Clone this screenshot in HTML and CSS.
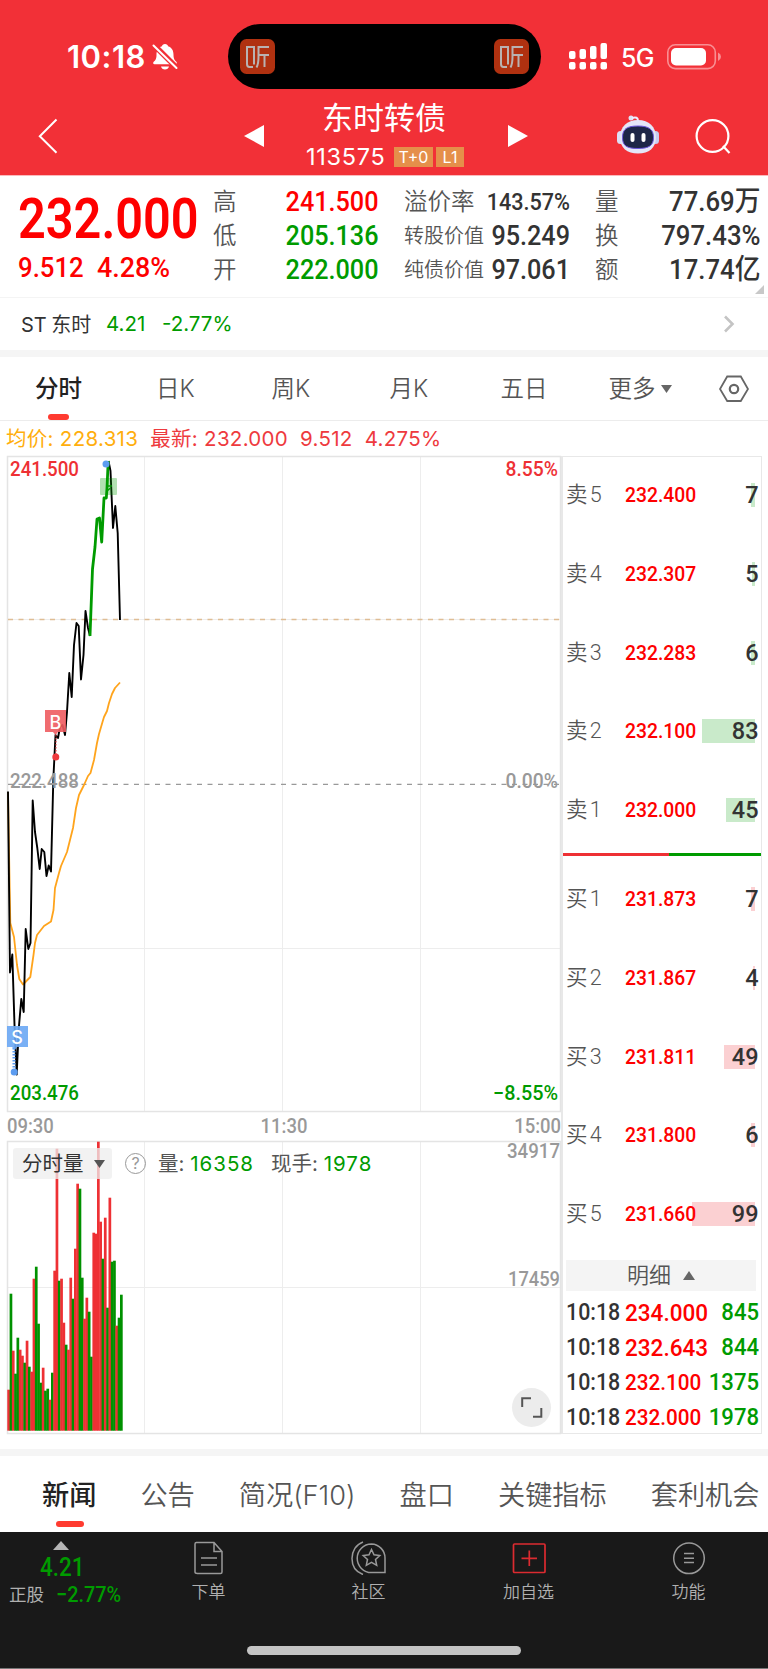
FILE: index.html
```html
<!DOCTYPE html>
<html lang="zh-CN">
<head>
    <meta charset="UTF-8">
    <meta name="viewport" content="width=device-width, initial-scale=1.0">
    <title>东时转债 113575</title>
    <link rel="stylesheet" href="styles.css">
</head>
<body>
    <header class="top">
        <div class="status">
            <span class="clock">10:18</span>
            <svg class="bell" width="26" height="28" viewBox="0 0 26 28">
                <path fill="#fff" d="M13 1c-1.8 0-2.800 1-3 2.200-4 1.200-5.500 4.500-5.500 8.500 0 4-1 5.300-3 7.300-.7.800-.3 2.200 1 2.200h21c1.300 0 1.700-1.400 1-2.200-2-2-3-3.300-3-7.300 0-4-1.500-7.300-5.500-8.500C15.800 2 14.800 1 13 1zM9 23.500h8c-.5 1.800-2 3-4 3s-3.500-1.200-4-3z"/>
                <path stroke="#f23037" stroke-width="5.500" d="M1 1l25 25"/>
                <path stroke="#fff" stroke-width="2" stroke-linecap="round" d="M1.500 2.500l23 22.500"/>
            </svg>
            <div class="island">
                <svg width="35" height="35" viewBox="0 0 35 35">
                    <rect width="35" height="35" rx="6.500" fill="#b03110"/>
                    <path fill="none" stroke="#b9b2b0" stroke-width="2" d="M13 28H9.500Q7 28 7 25V8h7v17.500M29 8H18.500v10q0 7-2 10.500M18.500 16H29M24.500 16v12"/>
                </svg>
                <svg width="35" height="35" viewBox="0 0 35 35">
                    <rect width="35" height="35" rx="6.500" fill="#b03110"/>
                    <path fill="none" stroke="#b9b2b0" stroke-width="2" d="M13 28H9.500Q7 28 7 25V8h7v17.500M29 8H18.500v10q0 7-2 10.500M18.500 16H29M24.500 16v12"/>
                </svg>
            </div>
            <svg class="signal" width="39" height="27" viewBox="0 0 39 27" fill="#fff">
                <rect x="0" y="8" width="6.500" height="8" rx="2"/><rect x="10.500" y="6" width="6.500" height="10" rx="2"/>
                <rect x="21" y="3" width="6.500" height="13" rx="2"/><rect x="31.500" y="0" width="6.500" height="16" rx="2"/>
                <rect x="0" y="19" width="6.500" height="7.500" rx="2"/><rect x="10.500" y="19" width="6.500" height="7.500" rx="2"/>
                <rect x="21" y="19" width="6.500" height="7.500" rx="2"/><rect x="31.500" y="19" width="6.500" height="7.500" rx="2"/>
            </svg>
            <span class="net">5G</span>
            <svg class="battery" width="55" height="26" viewBox="0 0 55 26">
                <rect x=".8" y=".8" width="47.500" height="23.800" rx="7.500" fill="none" stroke="#f98f93" stroke-width="1.600"/>
                <rect x="4" y="4" width="35" height="17.500" rx="5" fill="#fff"/>
                <path d="M51 8.500q3 1.500 3 4.200t-3 4.200z" fill="#f98f93"/>
            </svg>
        </div>
        <div class="nav">
            <svg class="back" width="20" height="36" viewBox="0 0 20 36"><path d="M18.500 1.500L1.800 18.300l16.700 16.500" fill="none" stroke="#fff" stroke-width="2"/></svg>
            <svg class="prev" width="20" height="22" viewBox="0 0 20 22"><path d="M20 0v22L0 11z" fill="#fff"/></svg>
            <div class="name">
                <h1>东时转债</h1>
                <div class="code"><span>113575</span><i>T+0</i><i>L1</i></div>
            </div>
            <svg class="next" width="20" height="22" viewBox="0 0 20 22"><path d="M0 0v22l20-11z" fill="#fff"/></svg>
            <svg class="robot" width="42" height="40" viewBox="0 0 42 40">
                <circle cx="14" cy="3" r="2.500" fill="#dfe2f5"/><path d="M15 3q6-2 6 3" fill="none" stroke="#eef" stroke-width="2"/>
                <rect x="0" y="16" width="7" height="13" rx="3.500" fill="#dcdff5"/><rect x="35" y="16" width="7" height="13" rx="3.500" fill="#c9ccf0"/>
                <path d="M21 5C10 5 3 12 3 22c0 11 7 16.500 18 16.500S39 33 39 22C39 12 32 5 21 5z" fill="#e4e6f8"/>
                <path d="M21 11c-11 0-15.500 3-15.500 11.500S10 33.500 21 33.500s15.500-3 15.500-11S32 11 21 11z" fill="#1d2647" stroke="#6c56dd" stroke-width="1"/>
                <rect x="13.500" y="18" width="4" height="9" rx="2" fill="#fff"/><rect x="24.500" y="18" width="4" height="9" rx="2" fill="#fff"/>
            </svg>
            <svg class="search" width="36" height="36" viewBox="0 0 36 36" fill="none" stroke="#fff" stroke-width="2.200"><circle cx="17.500" cy="17" r="15.900"/><path d="M28 27l6.500 7"/></svg>
        </div>
    </header>

    <section class="quote">
        <div class="last">
            <div class="price"><b>232.000</b></div>
            <div class="change"><b>9.512</b><b>4.28%</b></div>
        </div>
        <dl class="c1">
            <dt>高</dt><dd class="red">241.500</dd>
            <dt>低</dt><dd class="green">205.136</dd>
            <dt>开</dt><dd class="green">222.000</dd>
        </dl>
        <dl class="c2">
            <dt>溢价率</dt><dd class="small">143.57%</dd>
            <dt class="long">转股价值</dt><dd>95.249</dd>
            <dt class="long">纯债价值</dt><dd>97.061</dd>
        </dl>
        <dl class="c3">
            <dt>量</dt><dd>77.69万</dd>
            <dt>换</dt><dd>797.43%</dd>
            <dt>额</dt><dd>17.74亿</dd>
        </dl>
        <span class="corner"></span>
    </section>

    <div class="stock">
        <span class="stock-name">ST 东时</span>
        <span class="green">4.21</span>
        <span class="green">-2.77%</span>
        <svg width="12" height="18" viewBox="0 0 12 18"><path d="M2 1.500L9.500 9 2 16.500" fill="none" stroke="#c4c4c4" stroke-width="2.600"/></svg>
    </div>

    <nav class="periods">
        <a class="active">分时</a><a>日K</a><a>周K</a><a>月K</a><a>五日</a>
        <a class="more">更多<svg width="11" height="8" viewBox="0 0 11 8"><path d="M0 0h11L5.500 8z" fill="#666"/></svg></a>
        <svg class="hex" width="30" height="28" viewBox="0 0 30 28" fill="none" stroke="#666" stroke-width="1.800"><path d="M8.200 1.500h13.600L29 14l-7.200 12H8.200L1 14z"/><circle cx="15" cy="14" r="4.200" stroke-width="2.200"/></svg>
    </nav>

    <div class="legend">
        <span class="avg">均价: 228.313</span><span>最新: 232.000</span><span>9.512</span><span>4.275%</span>
    </div>

    <main class="board">
        <div class="charts">
            <svg class="chart" width="554" height="656" viewBox="7 456 554 656">
                <g class="grid"><path d="M144.500 457v654M282.500 457v654M420.500 457v654M8 619.500h552M8 948.500h552"/></g>
                <rect x="7.500" y="456.500" width="553" height="655" class="frame"/>
                <path d="M8 619.500h552" stroke="#dfbd94" stroke-width="1.400" stroke-dasharray="5 5.500"/>
                <path d="M8 784.300h552" stroke="#999" stroke-width="1.200" stroke-dasharray="5 5.500"/>
                <polyline class="avg-line" points="8,792 9,850 10.300,923 14,937 17,965 19.300,979 23,984.500 30.300,977 33.500,955 35,943 37,935 44,926 51,921.500 53.500,910 55,888 59,873 61,866 67,852 73,828 76,808 79,795 84,785 88,776 90.500,773 94,760 97,743 99,734 102.500,722 104,717 107,711 109,703 112,694 115,688 120,682.500"/>
                <polyline class="line" points="8,791.500 10,972.500 12.300,954.500 14.500,1025 16.700,1074.500 18.800,1028 21.300,999 23.700,1012 25.700,929 28.300,949 30.500,943 32.700,800.500 35,832 37.300,848 39.700,869 41.700,849 44.300,852 46.500,876 48.700,865.500 51,871.500 53.300,780 55.500,735 58,738 60,727 62.500,725 65,735 67,712 69.300,673 71.700,697 74,645 76.500,623 78.700,626 81,679.500 83.500,655 85.500,611 88,628 90,636"/>
                <polyline class="line" points="108.500,461 110.500,471 113,528 115.300,506 117.700,533 120,620"/>
                <polyline class="line up" points="90,636 92.500,569 95,547 97,519 99.500,518 101.700,542 104,498 106.300,498 107,488 108.200,461"/>
                <rect x="100" y="478" width="17" height="17" rx="1" fill="#009b00" fill-opacity=".3"/>
                <path d="M106 486h6M107 491l3.500-3" fill="none" stroke="#009b00" stroke-width="1.500"/>
                <circle cx="106" cy="464" r="3.500" fill="#5c9cf0"/>
                <path d="M56 735v20" stroke="#ee3a3e" stroke-dasharray="1.500 1.500"/>
                <path d="M45 710h21v22h-8l-2.500 3-2.500-3h-8z" fill="#ee5c60" fill-opacity=".9"/>
                <circle cx="55.800" cy="757" r="3.500" fill="#ee3a3e"/>
                <text x="55.500" y="728.500" class="mark">B</text>
                <path d="M14 1048v20" stroke="#5c9cf0" stroke-width="3" stroke-dasharray="1.500 1.500"/>
                <path d="M7 1026h21v21H17l-2.500 3-2.500-3H7z" fill="#6aa7f4" fill-opacity=".9"/>
                <circle cx="14.200" cy="1072" r="3.500" fill="#5c9cf0"/>
                <text x="17" y="1043.500" class="mark">S</text>
                <g class="scale">
                    <text x="10" y="475.500" textLength="69" lengthAdjust="spacingAndGlyphs" fill="#ee3034">241.500</text>
                    <text x="505.500" y="475.500" textLength="52.500" lengthAdjust="spacingAndGlyphs" fill="#ee3034">8.55%</text>
                    <text x="10" y="788" textLength="69" lengthAdjust="spacingAndGlyphs" fill="#999">222.488</text>
                    <text x="505.500" y="788" textLength="52.500" lengthAdjust="spacingAndGlyphs" fill="#999">0.00%</text>
                    <text x="10" y="1099.500" textLength="69" lengthAdjust="spacingAndGlyphs" fill="#009b00">203.476</text>
                    <text x="493" y="1099.500" textLength="65" lengthAdjust="spacingAndGlyphs" fill="#009b00">−8.55%</text>
                </g>
            </svg>
            <div class="times"><span>09:30</span><span>11:30</span><span>15:00</span></div>
            <div class="volume">
                <svg class="chart" width="554" height="293" viewBox="7 1141 554 293">
                    <g class="grid"><path d="M144.500 1142v291M282.500 1142v291M420.500 1142v291M8 1287.500h552"/></g>
                    <rect x="7.500" y="1141.500" width="553" height="292" class="frame"/>
                    <g id="bars"></g>
                    <g class="scale" fill="#999">
                        <text x="507" y="1158" textLength="53" lengthAdjust="spacingAndGlyphs">34917</text>
                        <text x="508" y="1285.500" textLength="52" lengthAdjust="spacingAndGlyphs">17459</text>
                    </g>
                </svg>
                <div class="vol-head">
                    <span class="picker">分时量<svg width="11" height="8" viewBox="0 0 11 8"><path d="M0 0h11L5.500 8z" fill="#555"/></svg></span>
                    <span class="help">?</span>
                    <span>量: <b>16358</b></span>
                    <span>现手: <b>1978</b></span>
                </div>
                <div class="expand"><svg width="22" height="22" viewBox="0 0 22 22"><path d="M1.200 10V1.200H10M12 19.800h8.300V11" fill="none" stroke="#555" stroke-width="2"/></svg></div>
            </div>
        </div>

        <aside class="book">
            <div class="levels sell">
                <div class="level"><span>卖 5</span><b>232.400</b><em><u style="width: 4px"></u>7</em></div>
                <div class="level"><span>卖 4</span><b>232.307</b><em><u style="width: 3px"></u>5</em></div>
                <div class="level"><span>卖 3</span><b>232.283</b><em><u style="width: 4px"></u>6</em></div>
                <div class="level"><span>卖 2</span><b>232.100</b><em><u style="width: 53px"></u>83</em></div>
                <div class="level"><span>卖 1</span><b>232.000</b><em><u style="width: 29px"></u>45</em></div>
            </div>
            <div class="ratio"><i style="width: 106px"></i></div>
            <div class="levels buy">
                <div class="level"><span>买 1</span><b>231.873</b><em><u style="width: 4px"></u>7</em></div>
                <div class="level"><span>买 2</span><b>231.867</b><em><u style="width: 2px"></u>4</em></div>
                <div class="level"><span>买 3</span><b>231.811</b><em><u style="width: 31px"></u>49</em></div>
                <div class="level"><span>买 4</span><b>231.800</b><em><u style="width: 4px"></u>6</em></div>
                <div class="level"><span>买 5</span><b>231.660</b><em><u style="width: 63px"></u>99</em></div>
            </div>
            <div class="detail">明细<svg width="12" height="9" viewBox="0 0 12 9"><path d="M6 0l6 9H0z" fill="#666"/></svg></div>
            <div class="ticks">
                <div><span>10:18</span><b>234.000</b><em>845</em></div>
                <div><span>10:18</span><b>232.643</b><em>844</em></div>
                <div><span>10:18</span><b class="fit">232.100</b><em>1375</em></div>
                <div><span>10:18</span><b class="fit">232.000</b><em>1978</em></div>
            </div>
        </aside>
    </main>

    <nav class="sections">
        <a class="active">新闻</a><a>公告</a><a>简况(F10)</a><a>盘口</a><a>关键指标</a><a>套利机会</a>
    </nav>

    <footer class="bar">
        <div class="under">
            <svg width="16" height="9" viewBox="0 0 16 9"><path d="M8 0l8 9H0z" fill="#b5b5b5"/></svg>
            <b>4.21</b>
            <p><span>正股</span><b>−2.77%</b></p>
        </div>
        <div class="item">
            <svg width="34" height="34" viewBox="0 0 34 34" fill="none" stroke="#999" stroke-width="1.500"><path d="M4 1.500h18l8 9V31q0 1.500-1.500 1.500h-23Q3 32.500 3 31V3q0-1.500 1.500-1.500zM22 1.500v9h8M9 17h16M9 24h16"/></svg>
            下单
        </div>
        <div class="item">
            <svg width="36" height="34" viewBox="0 0 36 34" fill="none" stroke="#999" stroke-width="1.500"><path d="M12 1C5 3.500 1 10 1 17.500S5 31 12 33.500M20.500 3a14.300 14.300 0 1 0 0 28.600H34V17.300A14 14 0 0 0 20.500 3z"/><path d="M20.500 8.500l2.500 5.300 5.800.7-4.300 4 1.200 5.800-5.200-2.900-5.200 2.900 1.200-5.800-4.300-4 5.800-.7z"/></svg>
            社区
        </div>
        <div class="item">
            <svg width="34" height="34" viewBox="0 0 34 34" fill="none" stroke="#dc2b30" stroke-width="1.700"><rect x="1.500" y="3" width="31.500" height="28.500" rx="1"/><path d="M9.500 17.300H25M17.300 9.500v15.500"/></svg>
            加自选
        </div>
        <div class="item">
            <svg width="34" height="34" viewBox="0 0 34 34" fill="none" stroke="#999" stroke-width="1.500"><circle cx="17" cy="17.300" r="15.300"/><path d="M12 12.500h10M12 17.300h10M12 21.500h10"/></svg>
            功能
        </div>
        <span class="home"></span>
    </footer>
    <script src="script.js"></script>
</body>
</html>
```
FILE: styles.css
```css
* {
    box-sizing: border-box;
    margin: 0;
    padding: 0;
}
body {
    width: 768px;
    height: 1669px;
    overflow: hidden;
    background: #fff;
    color: #333;
    font-family: Inter, "Noto Sans CJK SC", sans-serif;
}
i, em {
    font-style: normal;
}
u {
    text-decoration: none;
}
svg {
    display: block;
    flex: none;
}
.red { color: #fe0000; }
.green { color: #009b00; }

/* header */
.top {
    height: 176px;
    background: #f23037;
    border-bottom: 1px solid #fbb9bc;
    color: #fff;
}
.status {
    display: flex;
    align-items: center;
    height: 113px;
    padding-left: 67px;
}
.clock {
    width: 85px;
    font-size: 31px;
    font-weight: 600;
    letter-spacing: 0.5px;
    line-height: 40px;
}
.island {
    display: flex;
    justify-content: space-between;
    align-items: center;
    width: 313px;
    height: 65px;
    margin-left: 50px;
    padding: 0 12px;
    border-radius: 33px;
    background: #000;
}
.signal {
    margin-left: 28px;
}
.net {
    width: 46px;
    padding-left: 13px;
    font-size: 25px;
    font-weight: 500;
    letter-spacing: -0.8px;
    line-height: 30px;
    margin-top: 2px;
}
.battery {
    margin-left: 13px;
}
.nav {
    display: flex;
    align-items: flex-start;
    height: 62px;
    padding-left: 38px;
}
.back { margin-top: 5px; }
.prev { margin: 12px 0 0 186px; }
.next { margin-top: 12px; }
.name {
    width: 244px;
    margin-top: -15px;
    padding-left: 42px;
}
.name h1 {
    width: 156px;
    font-size: 31px;
    font-weight: 400;
    line-height: 40px;
    padding-left: 16px;
    white-space: nowrap;
}
.code {
    display: flex;
    align-items: center;
    height: 36px;
    margin-top: 1px;
    font-size: 23.5px;
    line-height: 36px;
    white-space: nowrap;
}
.code span {
    width: 88px;
    letter-spacing: 0.7px;
}
.code i {
    height: 20px;
    width: 39px;
    margin-right: 3px;
    background: #e58f4a;
    font-size: 16px;
    line-height: 20px;
    text-align: center;
}
.code i:last-child {
    width: 28px;
}
.robot { margin: 2px 0 0 89px; }
.search { margin: 6px 0 0 36px; }

/* quote */
.quote {
    position: relative;
    display: flex;
    height: 122px;
    border-bottom: 1px solid #f4f4f4;
    font-family: Roboto, "Noto Sans CJK SC", sans-serif;
}
.last {
    width: 213px;
    padding-left: 18px;
    color: #fe0000;
}
.price {
    height: 84px;
    font-size: 55px;
    line-height: 86px;
}
.price b, .change b {
    display: inline-block;
    font-weight: 500;
    transform: scaleX(0.92);
    transform-origin: left;
}
.price b {
    font-weight: 600;
    transform: scaleX(0.885);
}
.change {
    display: flex;
    font-size: 28px;
    line-height: 16px;
}
.change b:first-child {
    width: 79px;
}
.change b:last-child {
    transform: scaleX(0.96);
}
.quote dl {
    display: grid;
    grid-template-columns: auto 1fr;
    grid-auto-rows: 34px;
    padding-top: 9px;
    line-height: 34px;
    white-space: nowrap;
}
.quote dt {
    font-size: 23.5px;
    font-weight: 350;
    color: #555;
}
.quote dt.long {
    font-size: 20px;
}
.quote dd {
    font-size: 28px;
    font-weight: 500;
    text-align: right;
    transform: scaleX(0.9);
    transform-origin: right;
}
.quote dd.small {
    font-size: 24px;
}
.c1 { width: 165px; }
.c2 { width: 165px; margin-left: 26px; }
.c2 dd { margin-left: -20px; }
.c3 { width: 166px; margin-left: 26px; }
.quote .c2 { width: 166px; }
.quote .c3 { width: 165px; margin-left: 25px; }
.quote .c3 dd { transform: scaleX(0.92); }
.corner {
    position: absolute;
    right: 4px;
    bottom: 3px;
    border-left: 9px solid transparent;
    border-bottom: 9px solid #c8c8c8;
}

.stock {
    display: flex;
    align-items: center;
    height: 59px;
    padding: 0 33px 0 21px;
    border-bottom: 7px solid #f5f5f5;
}
.stock span {
    margin-top: -1px;
}
.stock .stock-name {
    width: 85px;
    font-size: 20px;
    word-spacing: -1px;
    white-space: nowrap;
}
.stock .green {
    width: 56px;
    font-size: 20.5px;
}
.stock svg {
    margin-left: auto;
}

/* period tabs */
.periods {
    display: flex;
    align-items: center;
    height: 64px;
    padding-left: 35px;
    border-bottom: 1px solid #ececec;
    font-size: 23.5px;
    line-height: 62px;
    font-weight: 350;
    color: #555;
}
.periods a {
    position: relative;
    width: 115.500px;
    white-space: nowrap;
}
.periods a:nth-child(1) { width: 121px; }
.periods a:nth-child(3) { width: 118px; }
.periods a:nth-child(4) { width: 111px; }
.periods a:nth-child(5) { width: 108px; }
.periods a.more {
    display: flex;
    align-items: center;
    gap: 5px;
    width: 110px;
}
.active {
    font-weight: 500;
    color: #222;
}
.periods .active::after {
    content: "";
    position: absolute;
    left: 13px;
    bottom: 0;
    width: 21px;
    height: 6px;
    border-radius: 3px;
    background: #ff3b30;
}

.legend {
    display: flex;
    height: 35px;
    padding-left: 6px;
    font-size: 20.5px;
    letter-spacing: 0.3px;
    line-height: 35px;
    color: #ee3a3e;
    white-space: nowrap;
}
.legend span { margin-right: 12px; }
.legend .avg { color: #ffae0d; }

/* charts */
.board {
    display: flex;
    height: 978px;
    padding-left: 7px;
}
.charts {
    width: 554px;
}
.chart {
    overflow: visible;
}
.grid {
    fill: none;
    stroke: #ededed;
}
.frame {
    fill: none;
    stroke: #e4e4e4;
    stroke-width: 1.5;
}
.line {
    fill: none;
    stroke: #000;
    stroke-width: 1.9;
    stroke-linejoin: round;
}
.up {
    stroke: #009b00;
    stroke-width: 2.8;
}
.avg-line {
    fill: none;
    stroke: #ffa41c;
    stroke-width: 1.8;
    stroke-linejoin: round;
}
.mark {
    fill: #fff;
    font: 500 18px Inter, sans-serif;
    text-anchor: middle;
}
.scale {
    font: 500 20.500px Roboto, sans-serif;
}
.times {
    display: flex;
    justify-content: space-between;
    height: 29px;
    font: 500 20.500px/28px Roboto, sans-serif;
    color: #999;
}
.times span {
    transform: scaleX(0.9);
    transform-origin: left;
}
.times span:nth-child(2) { transform-origin: center; }
.times span:last-child { transform-origin: right; }
.volume {
    position: relative;
    height: 293px;
}
.vol-head {
    position: absolute;
    left: 6px;
    top: 7px;
    display: flex;
    align-items: center;
    font-size: 20.5px;
    line-height: 31px;
    color: #555;
    white-space: nowrap;
}
.vol-head > span {
    margin-right: 17px;
}
.vol-head b {
    font-weight: 400;
    letter-spacing: 1px;
    color: #009b00;
}
.vol-head .picker {
    display: flex;
    align-items: center;
    gap: 10px;
    width: 99px;
    height: 31px;
    margin-right: 13px;
    padding-left: 9px;
    border-radius: 3px;
    background: rgba(238, 238, 238, 0.75);
    color: #333;
}
.vol-head .help {
    width: 21px;
    height: 21px;
    margin-right: 12px;
    border: 1.5px solid #999;
    border-radius: 50%;
    color: #999;
    font-size: 16px;
    line-height: 18px;
    text-align: center;
}
.expand {
    position: absolute;
    right: 10px;
    bottom: 7px;
    display: flex;
    justify-content: center;
    align-items: center;
    width: 39px;
    height: 39px;
    border-radius: 50%;
    background: #ececec;
}

/* order book */
.book {
    width: 201px;
    border: 1px solid #e8e8e8;
    border-left: 2px solid #e8e8e8;
    padding-left: 1px;
    font-family: Roboto, "Noto Sans CJK SC", sans-serif;
    white-space: nowrap;
}
.levels {
    height: 395px;
    padding-left: 2px;
}
.sell { margin-top: -1px; height: 397px; }
.level {
    display: flex;
    align-items: center;
    height: 78.700px;
    line-height: 30px;
}
.level span {
    width: 58.500px;
    font-size: 21.5px;
    font-weight: 350;
    word-spacing: -3px;
    color: #555;
}
.level b {
    position: relative;
    z-index: 1;
    width: 76px;
    font-size: 21px;
    font-weight: 500;
    color: #fe0000;
    transform: scaleX(0.92);
    transform-origin: left;
}
.level em {
    position: relative;
    width: 58px;
    font-size: 23.5px;
    font-weight: 500;
    text-align: right;
    z-index: 0;
}
.level u {
    position: absolute;
    right: 3.500px;
    top: 3px;
    height: 24px;
    background: #c9eaca;
    z-index: -1;
}
.buy .level u { background: #fbd0d2; }
.ratio {
    height: 3px;
    margin-left: -1px;
    background: #009b00;
}
.ratio i {
    display: block;
    height: 3px;
    background: #ee3034;
}
.buy { height: 397px; padding-top: 4px; }
.detail {
    display: flex;
    justify-content: center;
    align-items: center;
    gap: 12px;
    width: 190px;
    height: 31px;
    margin: 7px 0 0 2px;
    background: #f4f4f4;
    font-size: 22px;
    font-weight: 350;
    line-height: 29px;
    padding-bottom: 1px;
    color: #555;
}
.ticks {
    padding: 4px 0 0 2px;
}
.ticks div {
    display: flex;
    height: 34.900px;
    font-size: 23.5px;
    font-weight: 500;
    line-height: 35px;
}
.ticks span {
    width: 58.500px;
    transform: scaleX(0.91);
    transform-origin: left;
}
.ticks b {
    width: 83px;
    font-size: 24.5px;
    font-weight: 500;
    color: #fe0000;
    transform: scaleX(0.92);
    transform-origin: left;
}
.ticks b.fit { font-size: 22.5px; }
.ticks em {
    display: flex;
    justify-content: flex-end;
    width: 51px;
    color: #009b00;
    transform: scaleX(0.94);
    transform-origin: right;
}

/* section tabs */
.sections {
    display: flex;
    gap: 44px;
    height: 83px;
    margin-top: 15px;
    padding-left: 42px;
    border-top: 7px solid #f5f5f5;
    font-size: 27.2px;
    font-weight: 350;
    line-height: 79px;
    color: #555;
    white-space: nowrap;
}
.sections a { position: relative; }
.sections .active { font-weight: 500; }
.sections .active::after {
    content: "";
    position: absolute;
    left: 14px;
    top: 65px;
    width: 28px;
    height: 6px;
    border-radius: 3px;
    background: #ff3b30;
}

/* bottom bar */
.bar {
    position: relative;
    display: flex;
    height: 137px;
    padding-top: 8px;
    background: #191919;
    border-bottom: 1px solid #777;
    color: #b0b0b0;
}
.under {
    width: 128px;
    font-family: Roboto, "Noto Sans CJK SC", sans-serif;
    color: #009b00;
}
.under svg {
    margin: 1px 0 0 53px;
}
.under b {
    display: block;
    margin-left: 40px;
    font-size: 25px;
    font-weight: 500;
    line-height: 35px;
    transform: scaleX(0.9);
    transform-origin: left;
}
.under p {
    display: flex;
    padding-left: 9px;
    font-size: 17.5px;
    line-height: 21px;
    white-space: nowrap;
    color: #b0b0b0;
}
.under p b {
    margin-left: 12px;
    font-size: 22px;
    line-height: 19px;
    color: #009b00;
}
.item {
    display: flex;
    flex-direction: column;
    align-items: center;
    width: 160px;
    padding: 1px 0 0 1px;
    font-size: 17px;
    font-weight: 350;
    line-height: 35px;
}
.home {
    position: absolute;
    left: 247px;
    bottom: 13px;
    width: 274px;
    height: 9px;
    border-radius: 5px;
    background: #c4c4c4;
}
```
FILE: script.js
```js
// minute volumes: direction and bar height in px
const volumes = 'r41 g137 r80 g57 g93 r81 r75 g68 r90 g64 r59 r152 g164 g107 g48 r63 g40 g42 r31 g58 r160 r282 g150 r152 r108 g86 r81 r153 g132 r182 r247 g242 g153 r112 r133 g119 g74 r198 r197 r289 r209 g172 r213 g123 r233 g169 g170 r105 g113 g136';

const bars = document.getElementById('bars');
volumes.split(' ').forEach((v, i) => {
    const h = Number(v.slice(1));
    const rect = document.createElementNS('http://www.w3.org/2000/svg', 'rect');
    rect.setAttribute('x', 7.3 + i * 2.3);
    rect.setAttribute('y', 1430.700 - h);
    rect.setAttribute('width', 2.7);
    rect.setAttribute('height', h);
    rect.setAttribute('fill', v[0] === 'r' ? '#ee3034' : '#009100');
    bars.appendChild(rect);
});
```
